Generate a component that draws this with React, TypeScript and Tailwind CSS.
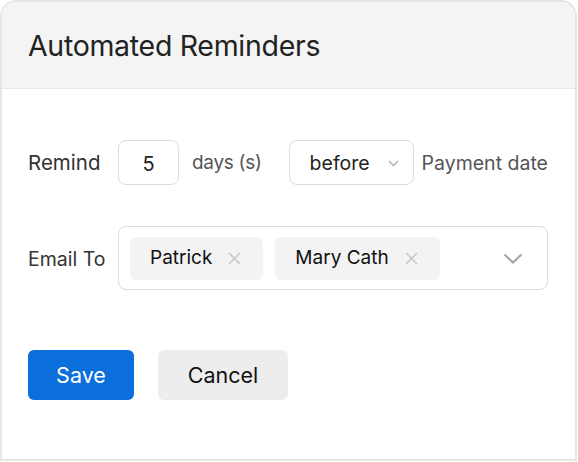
const font = { fontFamily: 'Inter, "Noto Sans", sans-serif' };

const Cross = () => (
  <svg width="13" height="13" viewBox="0 0 13 13" className="ml-4">
    <path d="M1 1L12 12M12 1L1 12" stroke="#c4c4c4" strokeWidth="1.4" fill="none" />
  </svg>
);

const Chip = ({ name }: { name: string }) => (
  <div className="flex h-[43px] items-center rounded-md bg-[#f3f3f3] pl-5 pr-[22px] text-[19px] text-[#111]">
    {name}
    <Cross />
  </div>
);

export default function App() {
  return (
    <div className="h-[462px] w-[578px] bg-white" style={font}>
      <div className="h-[461px] w-[577px] overflow-hidden rounded-t-2xl border-2 border-[#e6e6e6]">
        <div className="flex h-[87px] items-center border-b border-[#e8e8e8] bg-[#f4f4f4] pl-[26px] pt-0.5">
          <h1 className="text-[28.5px] font-normal tracking-[-0.3px] text-[#222]">Automated Reminders</h1>
        </div>

        <div className="px-[26px] pt-[51px]">
          <div className="flex items-center">
            <span className="w-[90px] pt-0.5 text-[20.5px] text-[#333]">Remind</span>
            <div className="flex h-[45px] w-[61px] items-center justify-center rounded-lg border border-[#dcdcdc] pt-0.5 text-[20px] text-[#222]">
              5
            </div>
            <span className="ml-[13px] pt-0.5 text-[19px] tracking-[-0.3px] text-[#555]">days (s)</span>
            <div className="ml-[27px] flex h-[45px] w-[125px] items-center justify-between rounded-lg border border-[#dcdcdc] pl-5 pr-[14px] pt-0.5 text-[19.5px] text-[#222]">
              before
              <svg width="11" height="7" viewBox="0 0 11 7">
                <path d="M1 1L5.5 5.5L10 1" stroke="#aaa" strokeWidth="1.3" fill="none" />
              </svg>
            </div>
            <span className="ml-[8px] pt-0.5 text-[19.5px] text-[#555]">Payment date</span>
          </div>

          <div className="mt-[41px] flex items-center">
            <span className="w-[90px] pt-1 text-[19.5px] text-[#333]">Email To</span>
            <div className="flex h-[64px] w-[430px] items-center gap-3 rounded-lg border border-[#dcdcdc] px-[11px]">
              <Chip name="Patrick" />
              <Chip name="Mary Cath" />
              <svg width="20" height="11" viewBox="0 0 20 11" className="ml-auto mr-[13px]">
                <path d="M1.5 1.5L10 9.5L18.5 1.5" stroke="#a8a8a8" strokeWidth="2.2" fill="none" />
              </svg>
            </div>
          </div>

          <div className="mt-[60px] flex gap-6">
            <button className="h-[50px] w-[106px] rounded-md bg-[#0a6fdb] text-[21.5px] text-white">Save</button>
            <button className="h-[50px] w-[130px] rounded-md bg-[#ededed] text-[21.5px] text-[#111]">Cancel</button>
          </div>
        </div>
      </div>
    </div>
  );
}
